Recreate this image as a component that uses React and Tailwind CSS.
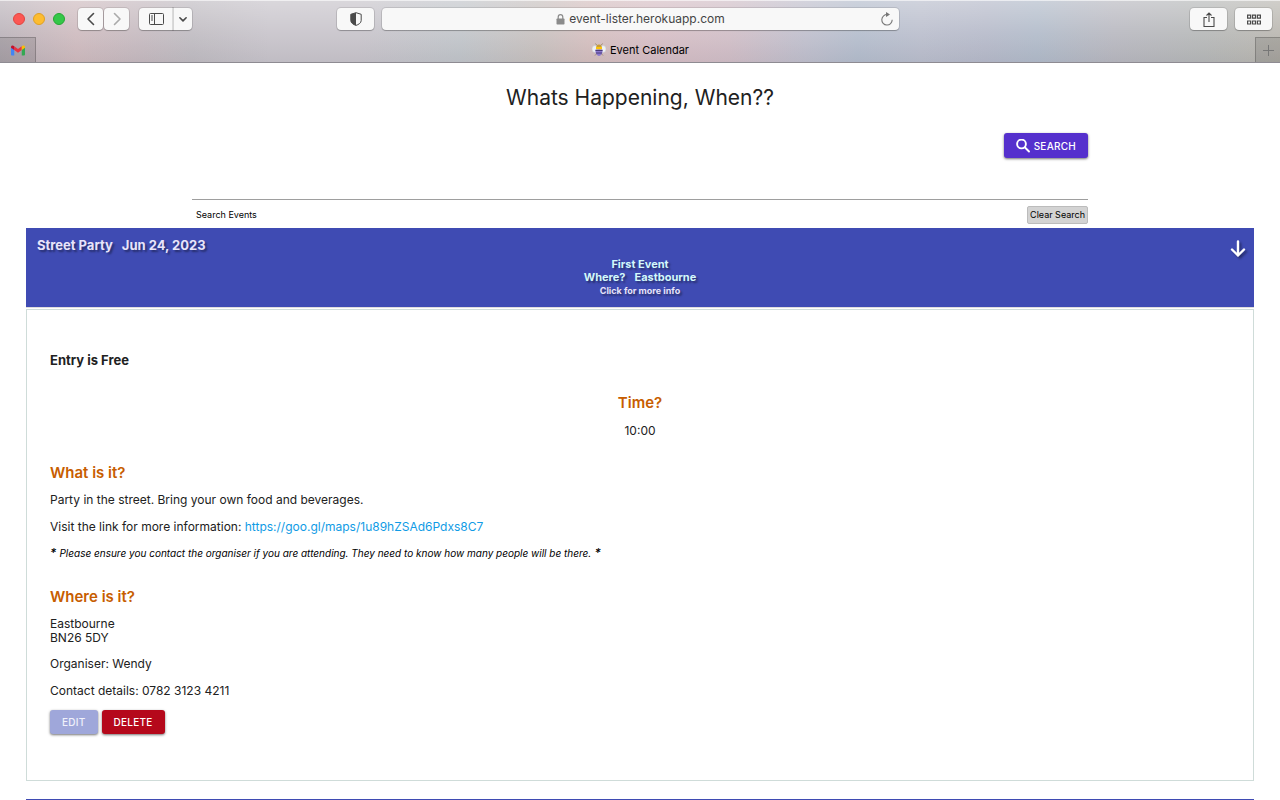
import React from "react";

const toolButton =
  "flex items-center justify-center bg-[#f8f8f8] shadow-[0_0_0_1px_rgba(0,0,0,0.1),0_1px_1px_rgba(0,0,0,0.22)] h-[22px] text-[#4a4a4a]";

function Chevron({ d, className, width = "1.6" }) {
  return (
    <svg className={className} viewBox="0 0 16 16" fill="none" stroke="currentColor" strokeWidth={width} strokeLinecap="round" strokeLinejoin="round" aria-hidden="true">
      <path d={d} />
    </svg>
  );
}

function GmailIcon() {
  return (
    <svg className="h-[11px] w-[14px]" viewBox="0 0 28 22" aria-hidden="true">
      <path d="M0 4v15a2 2 0 0 0 2 2h4.500V9z" fill="#4285f4" />
      <path d="M28 4v15a2 2 0 0 1-2 2h-4.500V9z" fill="#34a853" />
      <path d="M6.500 10V2.500L14 8.200l7.500-5.700V10L14 15.600z" fill="#ea3340" />
      <path d="M0 4C0 .8 3.600-.6 6.500 2.500V10L0 5.500z" fill="#c5102c" />
      <path d="M28 4c0-3.200-3.600-4.600-6.500-1.500V10L28 5.500z" fill="#fbbc04" />
    </svg>
  );
}

function BeeIcon() {
  return (
    <svg className="h-[14px] w-[14px]" viewBox="0 0 28 28" aria-hidden="true">
      <path d="M10 5 7 1M18 5l3-4M9 22l-3 3M19 22l3 3" stroke="#8a7a55" strokeWidth="1.500" />
      <ellipse cx="6" cy="12" rx="6" ry="7" fill="#eef1f2" stroke="#c5c9cf" />
      <ellipse cx="22" cy="12" rx="6" ry="7" fill="#eef1f2" stroke="#c5c9cf" />
      <path d="M14 3c4 0 6 3 5.500 7h-11C8 6 10 3 14 3z" fill="#c79b37" />
      <path d="M8 8h12v5H8z" fill="#fbc30b" />
      <path d="M7 13h14c1 7-3 13-7 13S6 20 7 13z" fill="#8b78cf" />
      <path d="M7 15h14M8 20h12" stroke="#4a3c78" strokeWidth="2" />
    </svg>
  );
}

function BrowserChrome() {
  return (
    <header className="relative shrink-0 border-b border-[#8e8b92] bg-[linear-gradient(90deg,#b9b1b8_0%,#cdb9bd_6%,#c4b8be_11%,#bebac0_15%,#c6c2c9_21%,#c6c2c9_28%,#bfc3c8_36%,#c6bfbd_42%,#d3bdbd_46%,#d5bcc3_51%,#cfbcc5_57%,#bdbdcb_63%,#b2bbcb_67%,#b8bccb_72%,#b4b8c8_77%,#afb9c8_81%,#b6b6be_87%,#b4b6b6_94%,#b8b5ae_100%)]">
      <div className="bg-[linear-gradient(180deg,rgba(255,255,255,0.35),rgba(255,255,255,0.1)_55%,rgba(100,100,110,0.06))]">
        <div className="flex h-[37px] items-center border-t border-white/60 pl-[13px] pr-2">
          <div className="flex gap-2">
            <button type="button" aria-label="Close window" className="h-3 w-3 rounded-full border border-[#e1443f] bg-[#fc5753]" />
            <button type="button" aria-label="Minimise window" className="h-3 w-3 rounded-full border border-[#dfa023] bg-[#fdbc30]" />
            <button type="button" aria-label="Zoom window" className="h-3 w-3 rounded-full border border-[#24a732] bg-[#34c748]" />
          </div>
          <div className="ml-[13px] flex gap-px">
            <button type="button" aria-label="Back" className={toolButton + " w-[25px] rounded"}>
              <Chevron className="h-4 w-4" d="M10.500 2.500 5 8l5.500 5.500" />
            </button>
            <button type="button" aria-label="Forward" className={toolButton + " w-[25px] rounded"}>
              <Chevron className="h-4 w-4 text-[#aaaaaa]" d="M5.500 2.500 11 8l-5.500 5.500" />
            </button>
          </div>
          <div className="ml-[10px] flex">
            <button type="button" aria-label="Sidebar" className={toolButton + " w-[34px] rounded-l"}>
              <svg className="h-3 w-[15px]" viewBox="0 0 15 12" fill="none" stroke="currentColor" aria-hidden="true">
                <rect x="0.500" y="0.500" width="14" height="11" rx="1" />
                <path d="M5.500 1v10M2 3h2M2 5h2M2 7h2" />
              </svg>
            </button>
            <button type="button" aria-label="Sidebar options" className={toolButton + " w-[19px] rounded-r border-l border-[#d5d5d5]"}>
              <Chevron className="h-[10px] w-[10px]" d="m3 6 5 5 5-5" width="2.600" />
            </button>
          </div>
          <div className="ml-[145px] flex min-w-0 flex-1">
            <button type="button" aria-label="Privacy report" className={toolButton + " w-[37px] rounded"}>
              <svg className="h-[14px] w-3" viewBox="0 0 12 14" aria-hidden="true">
                <path d="M6 .7 11.200 2.300v6.200C11.200 11 8.500 12.600 6 13.400 3.500 12.600.8 11 .8 8.500V2.300z" fill="none" stroke="currentColor" />
                <path d="M6 .7v12.700C3.500 12.600.8 11 .8 8.500V2.300z" fill="currentColor" />
              </svg>
            </button>
            <div className={toolButton + " relative ml-2 min-w-0 max-w-[517px] flex-1 gap-1 rounded"}>
              <svg className="h-[11px] w-[9px] text-[#8b8b8b]" viewBox="0 0 9 11" aria-hidden="true">
                <rect x="0.500" y="4.500" width="8" height="6" rx="0.800" fill="currentColor" />
                <path d="M2.200 5V3a2.300 2.300 0 0 1 4.600 0v2" fill="none" stroke="currentColor" strokeWidth="1.200" />
              </svg>
              <span className="text-[12px] leading-4 text-[#454545]">event-lister.herokuapp.com</span>
              <button type="button" aria-label="Reload" className="absolute right-[5px] top-1 h-[14px] w-[14px] text-[#777777]">
                <svg viewBox="0 0 14 14" fill="none" stroke="currentColor" strokeWidth="1.100" aria-hidden="true">
                  <path d="M7.500 2.600A5.200 5.200 0 1 0 12.200 7.800" />
                  <path d="M6 0v5l4-2.500z" fill="currentColor" stroke="none" />
                </svg>
              </button>
            </div>
          </div>
          <div className="flex gap-2">
            <button type="button" aria-label="Share" className={toolButton + " w-[37px] rounded"}>
              <svg className="h-[15px] w-3" viewBox="0 0 12 15" fill="none" stroke="currentColor" strokeWidth="1.100" aria-hidden="true">
                <path d="M4 5.500H1v9h10v-9H8M6 10V1M3.500 3.500 6 1l2.500 2.500" />
              </svg>
            </button>
            <button type="button" aria-label="Tab overview" className={toolButton + " w-[37px] rounded"}>
              <svg className="h-[11px] w-[14px]" viewBox="0 0 14 11" fill="none" stroke="currentColor" strokeWidth="1.200" aria-hidden="true">
                <path d="M.6 1.100h3v3h-3zM5.500 1.100h3v3h-3zM10.400 1.100h3v3h-3zM.6 7h3v3h-3zM5.500 7h3v3h-3zM10.400 7h3v3h-3z" />
              </svg>
            </button>
          </div>
        </div>
        <div className="flex h-[25px] items-stretch">
          <button type="button" aria-label="Gmail" className="flex w-9 items-center justify-center border-r border-t border-black/20 bg-black/10">
            <GmailIcon />
          </button>
          <div className="flex flex-1 items-center justify-center gap-1 pr-[10px] text-[11px] text-black">
            <BeeIcon />
            <span>Event Calendar</span>
          </div>
          <button type="button" aria-label="New tab" className="flex w-[25px] items-center justify-center border-l border-t border-black/20 bg-black/10 text-[#777777]">
            <svg className="h-[11px] w-[11px]" viewBox="0 0 11 11" stroke="currentColor" aria-hidden="true">
              <path d="M5.500 0v11M0 5.500h11" />
            </svg>
          </button>
        </div>
      </div>
    </header>
  );
}

const materialShadow = "shadow-[0_1px_3px_rgba(0,0,0,0.35),0_1px_2px_rgba(0,0,0,0.25)]";
const sectionHeading = "text-[15px] font-semibold leading-5 text-[#c75d00]";

export default function App() {
  return (
    <div className="flex h-screen flex-col overflow-hidden bg-white font-['Inter',sans-serif] text-[12px] leading-[14px] text-[#212121]">
      <BrowserChrome />
      <main className="min-h-0 flex-1 overflow-hidden">
        <h1 className="pt-5 text-center text-[21px] leading-[30px]">Whats Happening, When??</h1>

        <form className="mx-auto w-[70%]" onSubmit={(e) => e.preventDefault()}>
          <div className="flex justify-end pt-5">
            <button type="submit" className={"flex h-[25px] items-center gap-1 rounded-[3px] bg-[#5530cd] px-3 text-[10px] font-medium tracking-wide text-white " + materialShadow}>
              <svg className="h-[14px] w-[14px]" viewBox="0 0 14 14" fill="none" stroke="currentColor" strokeWidth="1.900" strokeLinecap="round" aria-hidden="true">
                <circle cx="5.500" cy="5" r="4.400" />
                <path d="m9 8.500 4 4" />
              </svg>
              SEARCH
            </button>
          </div>
          <input id="search" type="text" className="mt-[10px] block h-8 w-full border-b border-[#9e9e9e] outline-none" />
          <div className="flex items-center justify-between pb-1 pt-[6px] text-[9px]">
            <label htmlFor="search" className="pl-1 text-black">Search Events</label>
            <button type="reset" className="h-[18px] rounded-[2px] border border-[#bcbcbc] bg-[#d3d3d3] px-[2px] text-black">Clear Search</button>
          </div>
        </form>

        <section className="px-[26px]">
          <button type="button" className="relative block h-[79px] w-full bg-[#3f4bb3] text-center font-bold text-[#e8e4fa] shadow-[0_1px_0_#dddddd] [text-shadow:2px_2px_2px_rgba(0,0,0,0.4)]">
            <span className="flex items-center justify-between pl-[11px] pr-2 text-[13px] leading-[14px]">
              <span className="flex gap-[9px]"><span>Street Party</span><span>Jun 24, 2023</span></span>
              <svg className="absolute right-2 top-3 h-[18px] w-4 overflow-visible text-white drop-shadow-[2px_2px_1px_rgba(0,0,0,0.4)]" viewBox="0 0 16 18" fill="none" stroke="currentColor" strokeWidth="2.400" strokeLinecap="round" strokeLinejoin="round" aria-hidden="true">
                <path d="M8 1.500v14M2 9.500l6 6 6-6" />
              </svg>
            </span>
            <span className="block pt-[6px] text-[11px] leading-[13px] text-[#d3f8fb]">First Event</span>
            <span className="flex justify-center gap-[9px] text-[11px] leading-[13px] text-[#d3f8fb]"><span>Where?</span><span>Eastbourne</span></span>
            <span className="block text-[9px] leading-[13px]">Click for more info</span>
          </button>

          <article className="mt-[2px] border border-[#cfdcd9] px-[23px] pb-[46px] pt-[43px]">
            <p className="text-[13px] font-bold leading-[14px]">Entry is Free</p>
            <h2 className={"mt-[26px] text-center " + sectionHeading}>Time?</h2>
            <p className="mt-[11px] text-center">10:00</p>
            <h2 className={"mt-[25px] " + sectionHeading}>What is it?</h2>
            <p className="mt-[10px]">Party in the street. Bring your own food and beverages.</p>
            <p className="mt-[13px]">
              Visit the link for more information:{" "}
              <a href="https://goo.gl/maps/1u89hZSAd6Pdxs8C7" className="text-[#109be5]">https://goo.gl/maps/1u89hZSAd6Pdxs8C7</a>
            </p>
            <p className="mt-3 font-medium italic text-black">
              * <span className="text-[10px] font-normal">Please ensure you contact the organiser if you are attending. They need to know how many people will be there.</span> *
            </p>
            <h2 className={"mt-[27px] " + sectionHeading}>Where is it?</h2>
            <p className="mt-[10px]">Eastbourne<br />BN26 5DY</p>
            <p className="mt-3">Organiser: Wendy</p>
            <p className="mt-[13px]">Contact details: 0782 3123 4211</p>
            <div className="mt-3 flex gap-1">
              <button type="button" className={"h-6 rounded-[3px] bg-[#9fa7da] px-3 text-[10px] font-medium tracking-wide text-[#f0f1fb] " + materialShadow}>EDIT</button>
              <button type="button" className={"h-6 rounded-[3px] bg-[#b5081b] px-3 text-[10px] font-medium tracking-wide text-white " + materialShadow}>DELETE</button>
            </div>
          </article>

          <div className="mt-[18px] h-[79px] bg-[#3f4bb3]" />
        </section>
      </main>
    </div>
  );
}
